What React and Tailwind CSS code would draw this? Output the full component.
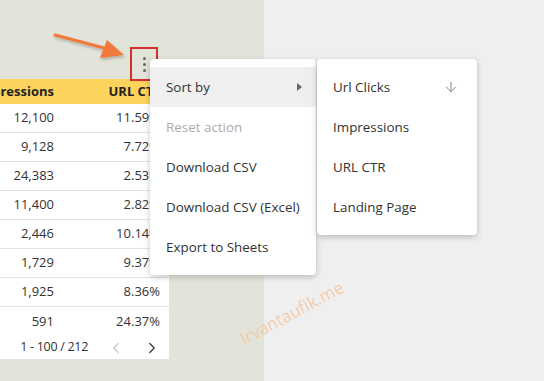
import React from "react";
import { ArrowDown, ChevronLeft, ChevronRight } from "lucide-react";

const rows = [
  ["12,100", "11.59%"],
  ["9,128", "7.72%"],
  ["24,383", "2.53%"],
  ["11,400", "2.82%"],
  ["2,446", "10.14%"],
  ["1,729", "9.37%"],
  ["1,925", "8.36%"],
  ["591", "24.37%"],
];

const font = { fontFamily: '"Open Sans", "Noto Sans", sans-serif' };

export default function App() {
  return (
    <div className="relative w-[544px] h-[381px] overflow-hidden flex text-[#333]" style={font}>
      {/* left canvas */}
      <div className="w-[264px] h-full bg-[#e3e4d9] pt-[79px]">
        <div className="w-[169px] bg-white flex flex-col text-[13px]">
          <div className="h-[25px] bg-[#fcd45d] flex items-center font-bold text-[#222]">
            <div className="w-[54px] flex justify-end overflow-visible whitespace-nowrap">Impressions</div>
            <div className="flex-1 flex justify-end pr-[7px] whitespace-nowrap">URL CTR</div>
          </div>
          {rows.map((r, i) => (
            <div
              key={i}
              className={`h-[29px] flex items-center ${i < rows.length - 1 ? "border-b border-[#e2e2e2]" : ""}`}
            >
              <div className="w-[54px] flex justify-end">{r[0]}</div>
              <div className="flex-1 flex justify-end pr-[9px]">{r[1]}</div>
            </div>
          ))}
          <div className="h-[23px] flex items-center">
            <div className="w-[88px] flex justify-end whitespace-nowrap text-[12.5px] tracking-[-0.3px]">1 - 100 / 212</div>
            <ChevronLeft size={18} strokeWidth={1.5} className="ml-[19px] text-[#c4c4c4]" />
            <ChevronRight size={18} strokeWidth={1.6} className="ml-[18px] text-[#333]" />
          </div>
        </div>
      </div>
      <div className="flex-1 h-full bg-[#efefef]" />

      {/* orange arrow */}
      <svg className="absolute left-[48px] top-[28px]" width="85" height="36" viewBox="0 0 85 36">
        <defs>
          <filter id="sh" x="-20%" y="-40%" width="140%" height="180%">
            <feDropShadow dx="1" dy="2" stdDeviation="1.5" floodColor="#000" floodOpacity="0.25" />
          </filter>
        </defs>
        <g filter="url(#sh)">
          <line x1="7" y1="7" x2="60" y2="21" stroke="#f0793a" strokeWidth="3" strokeLinecap="round" />
          <polygon points="76,27 52,30 59,12" fill="#f0793a" />
        </g>
      </svg>

      {/* red box with kebab */}
      <div className="absolute left-[130px] top-[47px] w-[28px] h-[34px] border-2 border-[#d32f2f] flex flex-col items-center pt-[8px] gap-[3px]">
        <div className="w-[3px] h-[3px] rounded-full bg-[#666]" />
        <div className="w-[3px] h-[3px] rounded-full bg-[#666]" />
        <div className="w-[3px] h-[3px] rounded-full bg-[#666]" />
      </div>

      {/* main menu */}
      <div className="absolute left-[150px] top-[59px] w-[166px] bg-white rounded-[4px] shadow-[0_2px_6px_rgba(0,0,0,0.22)] py-[8px] text-[13.4px]">
        <div className="h-[40px] bg-[#efefef] flex items-center pl-[16px] pr-[14px]">
          <span className="flex-1">Sort by</span>
          <span className="w-0 h-0 border-y-[4.5px] border-y-transparent border-l-[5px] border-l-[#666]" />
        </div>
        <div className="h-[40px] flex items-center pl-[16px] text-[#ababab]">Reset action</div>
        <div className="h-[40px] flex items-center pl-[16px]">Download CSV</div>
        <div className="h-[40px] flex items-center pl-[16px] whitespace-nowrap">Download CSV (Excel)</div>
        <div className="h-[40px] flex items-center pl-[16px]">Export to Sheets</div>
      </div>

      {/* submenu */}
      <div className="absolute left-[317px] top-[59px] w-[160px] bg-white rounded-[4px] shadow-[0_2px_6px_rgba(0,0,0,0.22)] py-[8px] text-[13.4px]">
        <div className="h-[40px] flex items-center pl-[16px] pr-[18px]">
          <span className="flex-1">Url Clicks</span>
          <ArrowDown size={16} strokeWidth={1.4} className="text-[#777]" />
        </div>
        <div className="h-[40px] flex items-center pl-[16px]">Impressions</div>
        <div className="h-[40px] flex items-center pl-[16px]">URL CTR</div>
        <div className="h-[40px] flex items-center pl-[16px]">Landing Page</div>
      </div>

      {/* watermark */}
      <div
        className="absolute left-[241px] top-[329px] text-[17px] leading-[22px] text-[#f6c396] opacity-80 whitespace-nowrap origin-left -rotate-[28deg]"
        style={font}
      >
        Irvantaufik.me
      </div>
    </div>
  );
}
